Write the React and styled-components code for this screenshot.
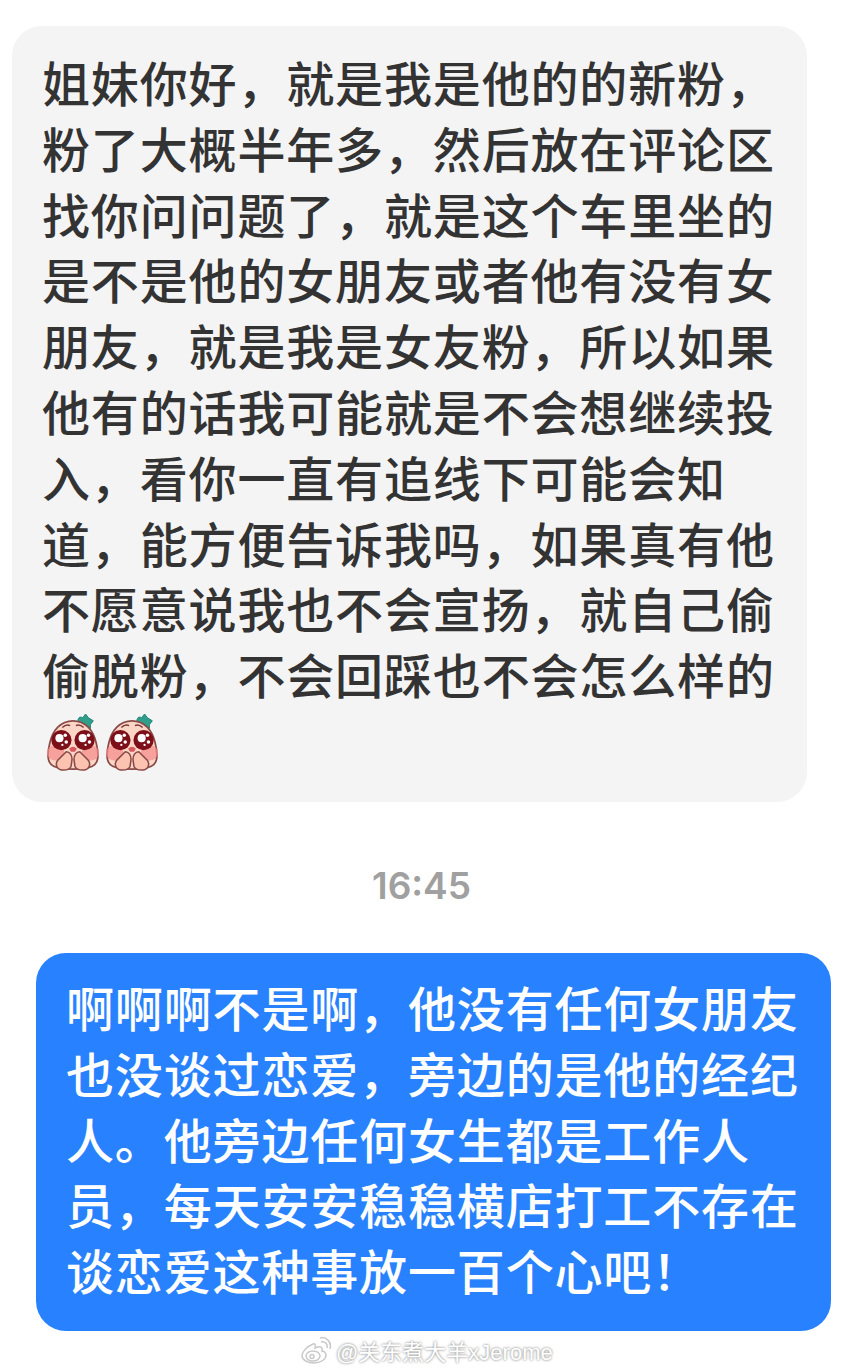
import React from 'react';
import styled, { createGlobalStyle } from 'styled-components';

const incoming = [
  '姐妹你好，就是我是他的的新粉，',
  '粉了大概半年多，然后放在评论区',
  '找你问问题了，就是这个车里坐的',
  '是不是他的女朋友或者他有没有女',
  '朋友，就是我是女友粉，所以如果',
  '他有的话我可能就是不会想继续投',
  '入，看你一直有追线下可能会知',
  '道，能方便告诉我吗，如果真有他',
  '不愿意说我也不会宣扬，就自己偷',
  '偷脱粉，不会回踩也不会怎么样的',
];

const outgoing = [
  '啊啊啊不是啊，他没有任何女朋友',
  '也没谈过恋爱，旁边的是他的经纪',
  '人。他旁边任何女生都是工作人',
  '员，每天安安稳稳横店打工不存在',
  '谈恋爱这种事放一百个心吧！',
];

const PeachEmoji = () => (
  <svg width="58" height="60" viewBox="0 0 60 62">
    <path d="M35 9 C35 5 37 3 40 5 L43 1 L46 5 L51 8 L48 12 L48 16 L43 13 L38 12 Z" fill="#2f9e8a" stroke="#1f8272" strokeWidth="1" />
    <path d="M30 8 C17 8 9 18 6 31 C3 43 3 52 10 55 C18 59 42 59 50 55 C57 52 57 43 54 31 C51 18 43 8 30 8 Z" fill="#fbd6c6" stroke="#8a4a48" strokeWidth="1.8" />
    <ellipse cx="12" cy="41" rx="9" ry="8" fill="#f58a8a" opacity="0.7" />
    <ellipse cx="48" cy="41" rx="9" ry="8" fill="#f58a8a" opacity="0.7" />
    <path d="M19 15 Q23 11 27 13 M33 13 Q37 11 41 15" stroke="#7a3a3a" strokeWidth="1.6" fill="none" />
    <circle cx="18" cy="28" r="10.5" fill="#7c0f18" />
    <circle cx="42" cy="28" r="10.5" fill="#7c0f18" />
    <circle cx="16" cy="26" r="4.2" fill="#fff" />
    <circle cx="22" cy="23" r="1.8" fill="#fff" />
    <circle cx="23" cy="30" r="1.8" fill="#fff" />
    <circle cx="19" cy="33" r="1.2" fill="#fff" />
    <circle cx="40" cy="26" r="4.2" fill="#fff" />
    <circle cx="46" cy="23" r="1.8" fill="#fff" />
    <circle cx="47" cy="30" r="1.8" fill="#fff" />
    <circle cx="43" cy="33" r="1.2" fill="#fff" />
    <path d="M26 37 Q30 33 34 37 L32 40 L28 40 Z" fill="#d9585c" />
    <path d="M20 59 C14 59 11 54 14 49 L23 40 C27 40 29 44 29 48 L28 55 C27 58 24 59 20 59 Z" fill="#fcc4b0" stroke="#8a4a48" strokeWidth="1.6" />
    <path d="M40 59 C46 59 49 54 46 49 L37 40 C33 40 31 44 31 48 L32 55 C33 58 36 59 40 59 Z" fill="#fcc4b0" stroke="#8a4a48" strokeWidth="1.6" />
  </svg>
);

const WeiboLogo = () => (
  <svg width="32" height="28" viewBox="0 0 32 28" fill="none" stroke="#c9c9c9" strokeWidth="1.5">
    <path d="M13 8 C6 11 2 16 2 20 C2 24 8 27 14 27 C21 27 26 23 26 19 C26 16 23 15 22 15 C23 12 21 10 18 11 L15 12 C16 9 15 7 13 8 Z" />
    <ellipse cx="13" cy="20" rx="7" ry="5" />
    <circle cx="12" cy="20.5" r="2" />
    <path d="M21 6 C25 5 28 8 27 12 M20 2 C26 0 32 6 30 13" />
  </svg>
);

const App = () => (
  <Page>
    <GlobalStyle />
    <IncomingBubble>
      {incoming.map((line) => (
        <Line key={line}>{line}</Line>
      ))}
      <Emojis>
        <PeachEmoji />
        <PeachEmoji />
      </Emojis>
    </IncomingBubble>
    <Time>16:45</Time>
    <OutgoingBubble>
      {outgoing.map((line) => (
        <Line key={line}>{line}</Line>
      ))}
    </OutgoingBubble>
    <Watermark>
      <WeiboLogo />
      <WatermarkText>@关东煮大羊xJerome</WatermarkText>
    </Watermark>
  </Page>
);

const GlobalStyle = createGlobalStyle`
  html, body {
    margin: 0;
    background: #ffffff;
  }
`;

const Page = styled.div`
  width: 856px;
  height: 1372px;
  overflow: hidden;
  padding-top: 26px;
  box-sizing: border-box;
  display: flex;
  flex-direction: column;
  font-family: "Noto Sans CJK SC", "Noto Sans", sans-serif;
`;

const Bubble = styled.div`
  width: 795px;
  box-sizing: border-box;
  border-radius: 30px;
`;

const IncomingBubble = styled(Bubble)`
  margin-left: 12px;
  height: 776px;
  padding: 26px 0 0 30px;
  background: #f4f4f4;
  color: #333333;
`;

const OutgoingBubble = styled(Bubble)`
  margin-left: 36px;
  height: 378px;
  padding: 24px 0 0 30px;
  background: #2882ff;
  color: #ffffff;
`;

const Line = styled.div`
  height: 65.8px;
  line-height: 58px;
  font-size: 48px;
  font-weight: 500;
  letter-spacing: 0.85px;
  white-space: nowrap;
`;

const Emojis = styled.div`
  display: flex;
  gap: 1px;
  margin-left: 2px;
  margin-top: 3px;
`;

const Time = styled.div`
  height: 151px;
  line-height: 168px;
  text-align: center;
  padding-right: 13px;
  font-family: Inter, "Liberation Sans", sans-serif;
  font-size: 37px;
  font-weight: 600;
  color: #a0a0a0;
`;

const Watermark = styled.div`
  display: flex;
  align-items: center;
  gap: 4px;
  margin: 4px 0 0 300px;
  height: 30px;
`;

const WatermarkText = styled.span`
  font-family: "Liberation Sans", "Noto Sans CJK SC", sans-serif;
  font-size: 22px;
  color: #ffffff;
  text-shadow: 0 0 3px #999999, 0 0 2px #b0b0b0;
  white-space: nowrap;
`;

export default App;
